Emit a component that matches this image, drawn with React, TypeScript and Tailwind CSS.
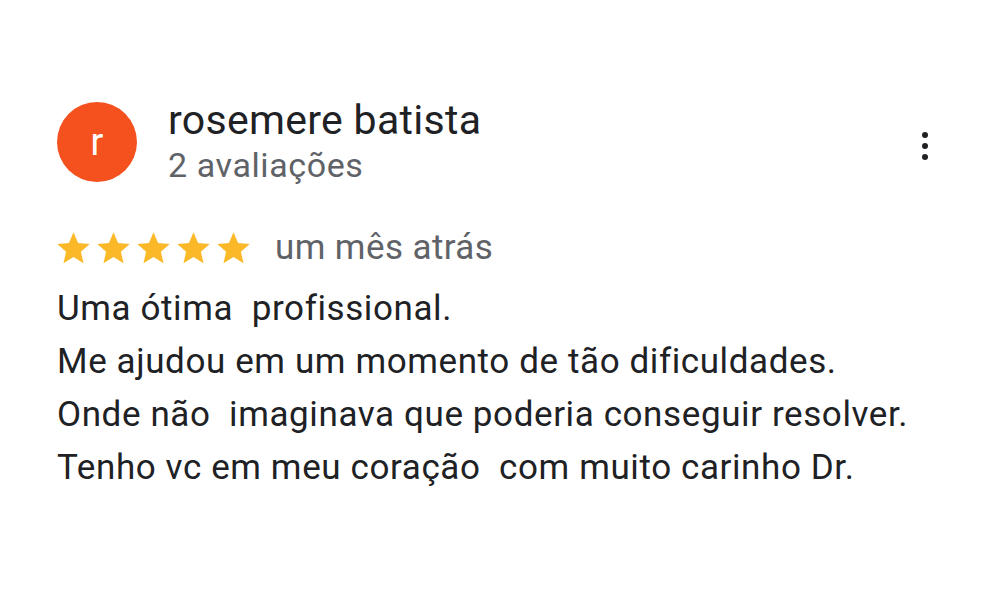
import React from "react";

const Star: React.FC = () => (
  <svg viewBox="0 0 24 24" className="w-[39px] h-[39px]" fill="#FBB829">
    <path d="M12 17.27L18.18 21l-1.64-7.03L22 9.24l-7.19-.61L12 2 9.19 8.63 2 9.24l5.46 4.73L5.82 21z" />
  </svg>
);

const lines = [
  "Uma ótima  profissional.",
  "Me ajudou em um momento de tão dificuldades.",
  "Onde não  imaginava que poderia conseguir resolver.",
  "Tenho vc em meu coração  com muito carinho Dr.",
];

const App: React.FC = () => {
  return (
    <div className="w-[1000px] h-[600px] bg-white font-['Roboto',sans-serif] pl-[57px] pr-[70px] pt-[102px]">
      <div className="flex items-start">
        <div className="w-[80px] h-[80px] rounded-full bg-[#F4511E] flex items-center justify-center text-white text-[38px]">
          r
        </div>
        <div className="ml-[31px] flex flex-col -mt-[7px]">
          <span className="text-[41px] leading-[50px] tracking-[0.3px] text-[#202124]">rosemere batista</span>
          <span className="text-[34px] leading-[40px] tracking-[0.6px] text-[#5f6368]">2 avaliações</span>
        </div>
        <div className="ml-auto mt-[30px] flex flex-col gap-[5px] items-center w-[10px]">
          <span className="w-[6px] h-[6px] rounded-full bg-[#202124]" />
          <span className="w-[6px] h-[6px] rounded-full bg-[#202124]" />
          <span className="w-[6px] h-[6px] rounded-full bg-[#202124]" />
        </div>
      </div>
      <div className="flex items-center mt-[43px]">
        <div className="flex gap-[1px] -ml-[3px]">
          <Star />
          <Star />
          <Star />
          <Star />
          <Star />
        </div>
        <span className="ml-[22px] text-[35px] leading-[40px] tracking-[0.4px] text-[#5f6368]">um mês atrás</span>
      </div>
      <div className="mt-[14px] text-[35px] leading-[53px] tracking-[0.6px] text-[#202124] whitespace-pre">
        {lines.map((l) => (
          <div key={l}>{l}</div>
        ))}
      </div>
    </div>
  );
};

export default App;
